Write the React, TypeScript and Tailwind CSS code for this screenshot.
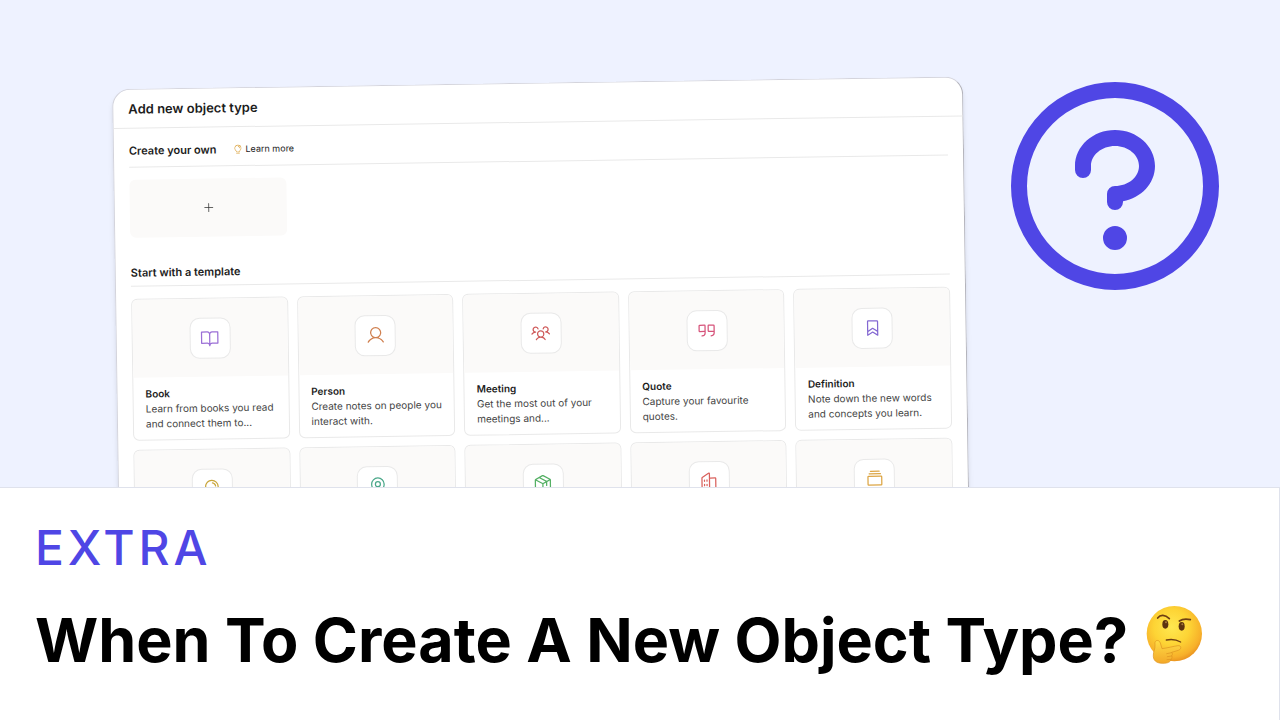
import React from 'react';
import type { IconType } from 'react-icons';
import {
  PiBookOpen,
  PiBookmark,
  PiBuildings,
  PiCardsThree,
  PiLightbulb,
  PiMapPin,
  PiPackage,
  PiPlus,
  PiQuestion,
  PiQuotes,
  PiUser,
  PiUsersThree,
} from 'react-icons/pi';

type Template = {
  name: string;
  description?: string;
  icon: IconType;
  color: string;
};

const templates: Template[] = [
  { name: 'Book', description: 'Learn from books you read and connect them to...', icon: PiBookOpen, color: 'text-[#9b6fd6]' },
  { name: 'Person', description: 'Create notes on people you interact with.', icon: PiUser, color: 'text-[#d08050]' },
  { name: 'Meeting', description: 'Get the most out of your meetings and...', icon: PiUsersThree, color: 'text-[#cf5a5a]' },
  { name: 'Quote', description: 'Capture your favourite quotes.', icon: PiQuotes, color: 'text-[#d6537a]' },
  { name: 'Definition', description: 'Note down the new words and concepts you learn.', icon: PiBookmark, color: 'text-[#8468d2]' },
];

const moreTemplates: Template[] = [
  { name: 'Idea', icon: PiLightbulb, color: 'text-[#c9a53a]' },
  { name: 'Place', icon: PiMapPin, color: 'text-[#4ba88a]' },
  { name: 'Product', icon: PiPackage, color: 'text-[#55b065]' },
  { name: 'Organization', icon: PiBuildings, color: 'text-[#d9605c]' },
  { name: 'Collection', icon: PiCardsThree, color: 'text-[#dca544]' },
];

const TemplateCard = ({ template }: { template: Template }) => {
  const Icon = template.icon;
  return (
    <button
      type="button"
      aria-label={template.name}
      className="flex h-[142px] min-w-0 flex-1 flex-col overflow-hidden rounded-md border border-[#e9e9e9] bg-white text-left"
    >
      <span className="flex h-[78px] w-full shrink-0 items-center justify-center bg-[#fbfaf9]">
        <span className="flex size-[41px] items-center justify-center rounded-[10px] border border-[#e9e9e9] bg-white">
          <Icon className={`size-5 ${template.color}`} />
        </span>
      </span>
      {template.description && (
        <span className="block px-3 pt-[9px] text-[10px] leading-[15px] text-[#444]">
          <span className="block font-semibold text-[#1c1c1c]">{template.name}</span>
          <span className="block">{template.description}</span>
        </span>
      )}
    </button>
  );
};

const ThinkingFace = () => (
  <svg viewBox="0 0 180 180" className="mb-[10px] size-[60px] shrink-0" role="img" aria-label="Thinking face">
    <defs>
      <radialGradient id="face" cx="0.45" cy="0.38" r="0.64">
        <stop offset="0" stopColor="#ffe850" />
        <stop offset="0.5" stopColor="#fdd435" />
        <stop offset="0.85" stopColor="#f7b02a" />
        <stop offset="1" stopColor="#e88f1e" />
      </radialGradient>
      <linearGradient id="hand" x1="0" y1="0" x2="0" y2="1">
        <stop offset="0" stopColor="#ffdc45" />
        <stop offset="1" stopColor="#f3a829" />
      </linearGradient>
    </defs>
    <circle cx="85" cy="86" r="83" fill="url(#face)" />
    {/* Eyes */}
    <ellipse cx="58" cy="58" rx="9" ry="13" fill="#5d3410" />
    <ellipse cx="107" cy="64" rx="9" ry="13" fill="#5d3410" />
    <circle cx="60" cy="52" r="3" fill="#a87a3c" />
    <circle cx="109" cy="58" r="3" fill="#a87a3c" />
    {/* Brows */}
    <path d="M35 39c8-11 22-11 35 2" fill="none" stroke="#6f3f12" strokeWidth="5" strokeLinecap="round" />
    <path d="M100 48c9-6 20-7 33-4" fill="none" stroke="#6f3f12" strokeWidth="5" strokeLinecap="round" />
    {/* Mouth */}
    <path d="M61 105c14-3 29-2 43 6" fill="none" stroke="#6f3f12" strokeWidth="4" strokeLinecap="round" />
    {/* Hand */}
    <path
      d="M27 118c-3-13 12-16 16-4l5 17c16-2 34-7 48-9 11-1 11 11 1 14l-20 6c3 3 3 7 0 10 2 4 1 8-2 11-1 8-10 12-24 12-22 0-30-10-29-25 0-12 6-16 5-32z"
      fill="url(#hand)"
      stroke="#dd9320"
      strokeWidth="2"
      strokeLinejoin="round"
    />
    <path d="M62 146l15-3M64 155l13-2M63 164l12-1" fill="none" stroke="#dd9320" strokeWidth="2" strokeLinecap="round" />
  </svg>
);

export default function App() {
  return (
    <div className="flex h-screen flex-col overflow-hidden bg-indigo-50 font-['Inter',sans-serif]">
      {/* Stage */}
      <div className="flex min-h-0 flex-1 items-start overflow-hidden pr-[37px] pl-28">
        {/* Object type dialog */}
        <section className="mt-[89px] mr-6 h-[520px] min-w-0 flex-1 origin-top-left rotate-[-0.85deg] rounded-[18px] border border-[#d4d4dc] border-r-[#b4b4bc] bg-white shadow-md">
          <header className="border-b border-[#e9e9e9] px-[15px] py-[9px]">
            <h2 className="text-[13px] leading-5 font-semibold text-[#1c1c1c]">Add new object type</h2>
          </header>
          <div className="px-[15px]">
            <div className="flex items-center gap-4 border-b border-[#e9e9e9] pt-[13px] pb-[7px] text-[#1c1c1c]">
              <h3 className="text-[11px] leading-[18px] font-semibold">Create your own</h3>
              <a href="#learn" className="flex items-center gap-[3px] text-[9px]">
                <PiLightbulb className="size-[10px] text-[#dca544]" />
                Learn more
              </a>
            </div>
            <button
              type="button"
              aria-label="Create"
              className="mt-3 flex h-[58px] w-[157px] items-center justify-center rounded-md bg-[#fbfaf9] text-[#333]"
            >
              <PiPlus className="size-3" />
            </button>
            <h3 className="mt-[26px] border-b border-[#e9e9e9] pb-1 text-[11px] leading-[18px] font-semibold text-[#1c1c1c]">
              Start with a template
            </h3>
            <div className="mt-3 flex gap-[9px]">
              {templates.map((template) => (
                <TemplateCard key={template.name} template={template} />
              ))}
            </div>
            <div className="mt-[9px] flex gap-[9px]">
              {moreTemplates.map((template) => (
                <TemplateCard key={template.name} template={template} />
              ))}
            </div>
          </div>
        </section>
        <PiQuestion className="mt-[58px] size-64 shrink-0 text-[#4f46e5]" />
      </div>

      {/* Caption */}
      <footer className="shrink-0 border-t border-r border-[#dfe2ec] bg-white px-[35px] pt-7 pb-10">
        <p className="text-5xl leading-[64px] font-medium tracking-[0.08em] text-[#4f46e5]">EXTRA</p>
        <h1 className="mt-5 flex items-center gap-[18px] text-[61px] leading-[80px] font-bold whitespace-nowrap text-black">
          When To Create A New Object Type?
          <ThinkingFace />
        </h1>
      </footer>
    </div>
  );
}
